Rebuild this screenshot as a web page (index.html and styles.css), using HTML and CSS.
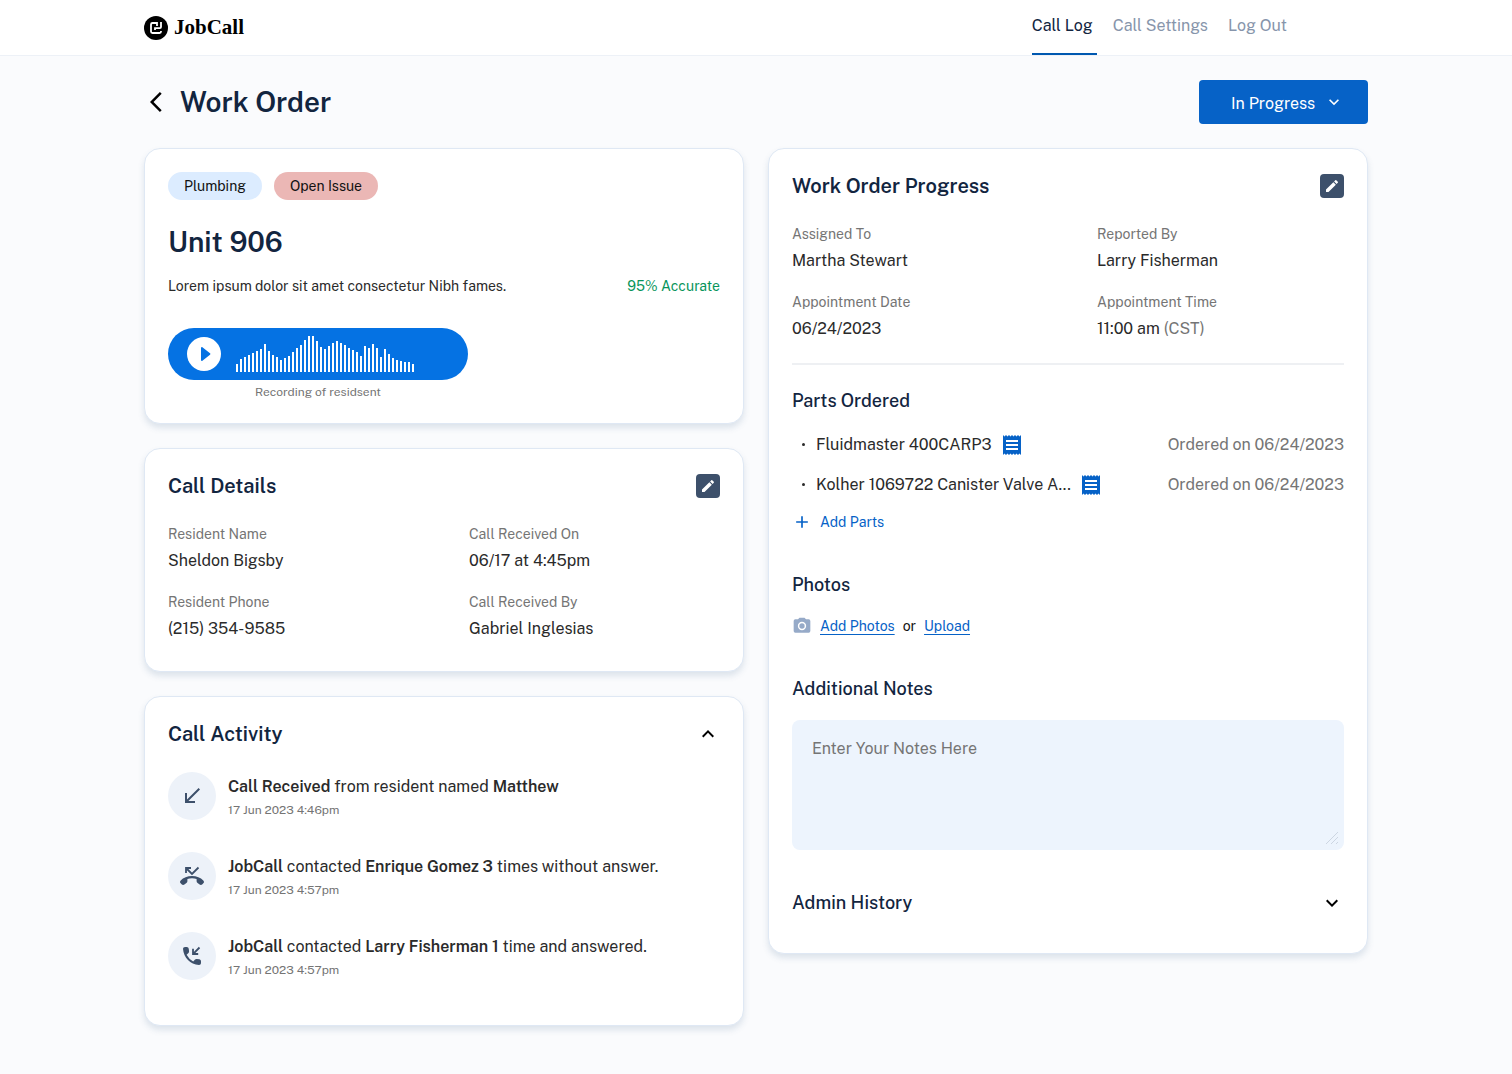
FILE: index.html
```html
<!DOCTYPE html>
<html lang="en">
<head>
    <meta charset="UTF-8">
    <meta name="viewport" content="width=device-width, initial-scale=1.0">
    <title>JobCall - Work Order</title>
    <link rel="stylesheet" href="styles.css">
</head>
<body>
    <!-- Top Navigation -->
    <header class="top-bar">
        <div class="top-bar-inner">
            <a class="logo" href="#">
                <svg width="24" height="24" viewBox="0 0 24 24" fill="none">
                    <circle cx="12" cy="12" r="12" fill="#000"/>
                    <path d="M13 7H8.500A1.500 1.500 0 0 0 7 8.500v7A1.500 1.500 0 0 0 8.500 17h7a1.500 1.500 0 0 0 1.500-1.500V15M17 6v5a1.200 1.200 0 0 1-1.200 1.200H11V14M13 6v4" stroke="#fff" stroke-width="1.800"/>
                </svg>
                <span>JobCall</span>
            </a>
            <nav class="top-nav">
                <a href="#" class="active">Call Log</a>
                <a href="#">Call Settings</a>
                <a href="#">Log Out</a>
            </nav>
        </div>
    </header>

    <main class="page">
        <div class="page-head">
            <button class="icon-btn" type="button" aria-label="Back">
                <svg width="24" height="24" viewBox="-6 0 24 24"><path d="M11.67 3.87 9.9 2.1 0 12l9.900 9.900 1.770-1.770L3.540 12z"/></svg>
            </button>
            <h1>Work Order</h1>
            <div class="status">
                <select aria-label="Status">
                    <option>In Progress</option>
                </select>
                <svg width="20" height="20" viewBox="0 0 24 24"><path d="M7.410 8.590 12 13.170l4.590-4.580L18 10l-6 6-6-6z"/></svg>
            </div>
        </div>

        <div class="columns">
            <div class="column">
                <!-- Unit -->
                <section class="card unit">
                    <div class="tags">
                        <span class="tag">Plumbing</span>
                        <span class="tag tag-open">Open Issue</span>
                    </div>
                    <h2>Unit 906</h2>
                    <div class="summary">
                        <p>Lorem ipsum dolor sit amet consectetur Nibh fames.</p>
                        <span class="accuracy">95% Accurate</span>
                    </div>
                    <figure class="recording">
                        <div class="player">
                            <button class="icon-btn" type="button" aria-label="Play">
                                <svg width="40" height="40" viewBox="0 0 40 40">
                                    <circle cx="20" cy="20" r="17" fill="#fff"/>
                                    <path d="M17 14v12c0 .8.800 1.200 1.400.7l7.600-6c.5-.4.5-1 0-1.400l-7.600-6c-.6-.5-1.400-.1-1.400.7z" fill="#0572e3"/>
                                </svg>
                            </button>
                            <svg width="178" height="36" viewBox="0 0 178 36" stroke="#fff" stroke-width="2">
                                <path d="M1 36v-8M5 36v-13M9 36v-15M13 36v-17M17 36v-19M21 36v-21M25 36v-23M29 36v-28M33 36v-21M37 36v-17M41 36v-15M45 36v-12M49 36v-14M53 36v-16M57 36v-20M61 36v-24M65 36v-27M69 36v-32M73 36v-36M77 36v-36M81 36v-31M85 36v-25M89 36v-23M93 36v-26M97 36v-29M101 36v-31M105 36v-29M109 36v-27M113 36v-24M117 36v-22M121 36v-20M125 36v-16M129 36v-26M133 36v-24M137 36v-28M141 36v-24M145 36v-15M149 36v-23M153 36v-18M157 36v-14M161 36v-12M165 36v-11M169 36v-10M173 36v-10M177 36v-8"/>
                            </svg>
                        </div>
                        <figcaption>Recording of residsent</figcaption>
                    </figure>
                </section>

                <!-- Call Details -->
                <section class="card details">
                    <div class="card-head">
                        <h3>Call Details</h3>
                        <button class="edit-btn" type="button" aria-label="Edit call details">
                            <svg width="16" height="16" viewBox="0 0 24 24"><path d="M3 17.250V21h3.750L17.810 9.940l-3.750-3.750L3 17.250zM20.710 7.040c.39-.39.39-1.020 0-1.410l-2.340-2.340a1 1 0 0 0-1.410 0l-1.830 1.830 3.750 3.750 1.830-1.830z"/></svg>
                        </button>
                    </div>
                    <dl class="fields">
                        <div><dt>Resident Name</dt><dd>Sheldon Bigsby</dd></div>
                        <div><dt>Call Received On</dt><dd>06/17 at 4:45pm</dd></div>
                        <div><dt>Resident Phone</dt><dd>(215) 354-9585</dd></div>
                        <div><dt>Call Received By</dt><dd>Gabriel Inglesias</dd></div>
                    </dl>
                </section>

                <!-- Call Activity -->
                <section class="card activity">
                    <div class="card-head">
                        <h3>Call Activity</h3>
                        <button class="icon-btn" type="button" aria-label="Collapse call activity">
                            <svg width="24" height="24" viewBox="0 0 24 24"><path d="m12 8-6 6 1.410 1.410L12 10.830l4.590 4.580L18 14z"/></svg>
                        </button>
                    </div>
                    <ul>
                        <li>
                            <span class="activity-icon">
                                <svg width="24" height="24" viewBox="0 0 24 24"><path d="M20 5.410 18.590 4 7 15.590V9H5v10h10v-2H8.410z"/></svg>
                            </span>
                            <div>
                                <p><b>Call Received</b> from resident named <b>Matthew</b></p>
                                <time>17 Jun 2023 4:46pm</time>
                            </div>
                        </li>
                        <li>
                            <span class="activity-icon">
                                <svg width="24" height="24" viewBox="0 0 24 24">
                                    <path d="M12 12c-4.600 0-8.600 1.600-11.300 4.500-.9.900-.9 2 0 2.800l.9.900c.8.800 1.900.900 2.800.3l2-1.400c.6-.5 1-1.100 1-1.900v-2.300c1.400-.5 3-.7 4.600-.7s3.200.2 4.600.7v2.300c0 .8.400 1.400 1 1.900l2 1.400c.9.600 2 .5 2.800-.3l.9-.9c.9-.8.900-1.900 0-2.800C20.600 13.600 16.600 12 12 12z"/>
                                    <path d="M11 4H6v5M6 4l6 6 6.500-6.500" fill="none" stroke="#3d506b" stroke-width="1.800"/>
                                </svg>
                            </span>
                            <div>
                                <p><b>JobCall</b> contacted <b>Enrique Gomez 3</b> times without answer.</p>
                                <time>17 Jun 2023 4:57pm</time>
                            </div>
                        </li>
                        <li>
                            <span class="activity-icon">
                                <svg width="24" height="24" viewBox="0 0 24 24">
                                    <path d="m19.230 15.260-2.540-.29c-.61-.07-1.210.14-1.640.57l-1.840 1.840a15.050 15.050 0 0 1-6.590-6.590l1.850-1.850c.43-.43.64-1.030.57-1.640l-.29-2.520A2 2 0 0 0 6.760 3.010H5.030c-1.130 0-2.070.94-2 2.070.53 8.540 7.360 15.360 15.890 15.890 1.130.07 2.070-.87 2.070-2v-1.730c.01-1.010-.75-1.860-1.760-1.980z"/>
                                    <path d="m19.500 3.500-6.300 6.300M13 4.800V10h5.200" fill="none" stroke="#3d506b" stroke-width="1.800"/>
                                </svg>
                            </span>
                            <div>
                                <p><b>JobCall</b> contacted <b>Larry Fisherman 1</b> time and answered.</p>
                                <time>17 Jun 2023 4:57pm</time>
                            </div>
                        </li>
                    </ul>
                </section>
            </div>

            <div class="column">
                <!-- Work Order Progress -->
                <section class="card progress">
                    <div class="card-head">
                        <h3>Work Order Progress</h3>
                        <button class="edit-btn" type="button" aria-label="Edit progress">
                            <svg width="16" height="16" viewBox="0 0 24 24"><path d="M3 17.250V21h3.750L17.810 9.940l-3.750-3.750L3 17.250zM20.710 7.040c.39-.39.39-1.020 0-1.410l-2.340-2.340a1 1 0 0 0-1.410 0l-1.830 1.830 3.750 3.750 1.830-1.830z"/></svg>
                        </button>
                    </div>
                    <dl class="fields">
                        <div><dt>Assigned To</dt><dd>Martha Stewart</dd></div>
                        <div><dt>Reported By</dt><dd>Larry Fisherman</dd></div>
                        <div><dt>Appointment Date</dt><dd>06/24/2023</dd></div>
                        <div><dt>Appointment Time</dt><dd>11:00 am <span class="muted">(CST)</span></dd></div>
                    </dl>
                    <hr>

                    <h4>Parts Ordered</h4>
                    <ul class="parts">
                        <li>
                            <span>Fluidmaster 400CARP3</span>
                            <svg width="24" height="24" viewBox="0 0 24 24"><path d="M18 17H6v-2h12v2zm0-4H6v-2h12v2zm0-4H6V7h12v2zM3 22l1.500-1.500L6 22l1.500-1.500L9 22l1.500-1.500L12 22l1.500-1.500L15 22l1.500-1.500L18 22l1.500-1.500L21 22V2l-1.500 1.500L18 2l-1.500 1.500L15 2l-1.500 1.500L12 2l-1.500 1.500L9 2 7.500 3.500 6 2 4.500 3.500 3 2v20z"/></svg>
                            <span class="ordered">Ordered on 06/24/2023</span>
                        </li>
                        <li>
                            <span>Kolher 1069722 Canister Valve A...</span>
                            <svg width="24" height="24" viewBox="0 0 24 24"><path d="M18 17H6v-2h12v2zm0-4H6v-2h12v2zm0-4H6V7h12v2zM3 22l1.500-1.500L6 22l1.500-1.500L9 22l1.500-1.500L12 22l1.500-1.500L15 22l1.500-1.500L18 22l1.500-1.500L21 22V2l-1.500 1.500L18 2l-1.500 1.500L15 2l-1.500 1.500L12 2l-1.500 1.500L9 2 7.500 3.500 6 2 4.500 3.500 3 2v20z"/></svg>
                            <span class="ordered">Ordered on 06/24/2023</span>
                        </li>
                    </ul>
                    <button class="add-parts" type="button">
                        <svg width="20" height="20" viewBox="0 0 24 24"><path d="M19 13h-6v6h-2v-6H5v-2h6V5h2v6h6z"/></svg>
                        Add Parts
                    </button>

                    <h4>Photos</h4>
                    <div class="photos">
                        <svg width="20" height="20" viewBox="0 0 24 24"><circle cx="12" cy="12" r="3.200"/><path d="M9 2 7.170 4H4a2 2 0 0 0-2 2v12a2 2 0 0 0 2 2h16a2 2 0 0 0 2-2V6a2 2 0 0 0-2-2h-3.170L15 2H9zm3 15a5 5 0 1 1 0-10 5 5 0 0 1 0 10z"/></svg>
                        <a href="#">Add Photos</a>
                        <span>or</span>
                        <a href="#">Upload</a>
                    </div>

                    <h4><label for="notes">Additional Notes</label></h4>
                    <div class="notes">
                        <textarea id="notes" placeholder="Enter Your Notes Here"></textarea>
                        <svg width="14" height="14" viewBox="0 0 14 14"><path d="M1 13 13 1M6 13l7-7M11 13l2-2"/></svg>
                    </div>

                    <div class="history">
                        <h4>Admin History</h4>
                        <button class="icon-btn" type="button" aria-label="Expand admin history">
                            <svg width="24" height="24" viewBox="0 0 24 24"><path d="M7.410 8.590 12 13.170l4.590-4.580L18 10l-6 6-6-6z"/></svg>
                        </button>
                    </div>
                </section>
            </div>
        </div>
    </main>
</body>
</html>
```
FILE: styles.css
```css
/* Global Styles */
* {
    margin: 0;
    padding: 0;
    box-sizing: border-box;
}

body {
    font-family: "Public Sans", Inter, "Liberation Sans", sans-serif;
    font-size: 16px;
    line-height: 25px;
    background-color: #fafbfd;
    color: #2a2a2a;
}

h1, h2, h3 {
    color: #12253f;
    font-weight: 600;
}

h1, h2 {
    font-size: 28px;
    line-height: 36px;
}

h3 {
    font-size: 20px;
    line-height: 28px;
}

h4 {
    font-size: 18px;
    font-weight: 500;
    color: #12253f;
}

ul {
    list-style: none;
}

svg {
    display: block;
    flex-shrink: 0;
}

button, select, textarea {
    font: inherit;
    border: none;
}

button {
    background: none;
    cursor: pointer;
}

.muted {
    color: #757575;
}

/* Top Navigation */
.top-bar {
    background-color: #fff;
    border-bottom: 1px solid #edf1f7;
}

.top-bar-inner {
    max-width: 1224px;
    height: 55px;
    margin: 0 auto;
    padding-right: 77px;
    display: flex;
    justify-content: space-between;
    align-items: center;
}

.logo {
    display: flex;
    align-items: center;
    gap: 6px;
    color: #000;
    text-decoration: none;
    font-family: "Liberation Serif", serif;
    font-size: 21px;
    font-weight: 700;
}

.top-nav {
    align-self: stretch;
    display: flex;
    gap: 16px;
}

.top-nav a {
    padding: 13px 4px 0 0;
    color: #8795ab;
    text-decoration: none;
    border-bottom: 2px solid transparent;
}

.top-nav .active {
    color: #12253f;
    border-color: #0058b0;
}

/* Page heading */
.page {
    max-width: 1224px;
    margin: 0 auto;
    padding: 24px 0 48px;
}

.page-head {
    display: flex;
    align-items: center;
    gap: 12px;
    margin-bottom: 24px;
}

.status {
    position: relative;
    margin-left: auto;
}

.status select {
    appearance: none;
    height: 44px;
    padding: 2px 52px 0 32px;
    border-radius: 4px;
    background-color: #0662c7;
    color: #fff;
}

.status svg {
    position: absolute;
    top: 12px;
    right: 24px;
    fill: #fff;
    pointer-events: none;
}

/* Cards */
.columns {
    display: grid;
    grid-template-columns: 1fr 1fr;
    align-items: start;
    gap: 24px;
}

.column {
    display: grid;
    gap: 24px;
}

.card {
    padding: 23px;
    background-color: #fff;
    border: 1px solid #dfe8f4;
    border-radius: 16px;
    box-shadow: 0 4px 6px rgba(70, 105, 145, 0.16);
}

.card-head {
    display: flex;
    justify-content: space-between;
    align-items: center;
    margin-bottom: 24px;
}

.edit-btn {
    display: grid;
    place-items: center;
    width: 24px;
    height: 24px;
    border-radius: 4px;
    background-color: #3d506b;
    fill: #fff;
}

.fields {
    display: grid;
    grid-template-columns: 6fr 5fr;
    gap: 19px 0;
}

.fields dt {
    margin-bottom: 4px;
    font-size: 14px;
    line-height: 20px;
    color: #757575;
}

/* Unit */
.tags {
    display: flex;
    gap: 12px;
    margin-bottom: 24px;
}

.tag {
    padding: 0 16px;
    border-radius: 14px;
    font-size: 14px;
    line-height: 28px;
    background-color: #dcecff;
    color: #111;
}

.tag-open {
    background-color: #ebb7b5;
}

.summary {
    display: flex;
    justify-content: space-between;
    margin: 16px 0 32px;
    font-size: 14px;
    line-height: 20px;
}

.accuracy {
    color: #07945a;
}

.recording {
    width: 300px;
}

.player {
    display: flex;
    align-items: center;
    gap: 12px;
    height: 52px;
    padding: 0 16px;
    border-radius: 26px;
    background-color: #0572e3;
}

.recording figcaption {
    margin-top: 4px;
    font-size: 12px;
    line-height: 16px;
    text-align: center;
    color: #757575;
}

.details {
    padding-bottom: 30px;
}

/* Call Activity */
.activity {
    padding-bottom: 45px;
}

.activity ul {
    display: grid;
    gap: 32px;
}

.activity li {
    display: flex;
    align-items: center;
    gap: 12px;
}

.activity b {
    font-weight: 600;
}

.activity time {
    display: block;
    margin-top: 3px;
    font-size: 12px;
    line-height: 16px;
    color: #757575;
}

.activity-icon {
    display: grid;
    place-items: center;
    width: 48px;
    height: 48px;
    border-radius: 50%;
    background-color: #edf2f9;
    fill: #3d506b;
}

/* Work Order Progress */
.progress {
    padding-bottom: 38px;
}

.progress .fields {
    grid-template-columns: 21fr 17fr;
}

.progress hr {
    height: 2px;
    margin: 22px 0 23px;
    border: none;
    background-color: #eef0f3;
}

.parts {
    display: grid;
    gap: 15px;
    margin: 19px 0 15px;
}

.parts li {
    display: flex;
    align-items: center;
    gap: 8px;
}

.parts li::before {
    content: "";
    width: 3px;
    height: 3px;
    margin: 0 3px 0 10px;
    border-radius: 50%;
    background-color: #2a2a2a;
}

.parts svg {
    fill: #0662c7;
}

.ordered {
    margin-left: auto;
    color: #757575;
}

.add-parts {
    display: flex;
    gap: 8px;
    margin-bottom: 40px;
    font-size: 14px;
    line-height: 20px;
    color: #0662c7;
    fill: #0662c7;
}

.photos {
    display: flex;
    gap: 8px;
    margin: 19px 0 40px;
    font-size: 14px;
    line-height: 20px;
    color: #111;
    fill: #96aac8;
}

.photos a {
    color: #0662c7;
    text-underline-offset: 3px;
}

.notes {
    position: relative;
    margin: 19px 0 40px;
}

.notes textarea {
    display: block;
    width: 100%;
    height: 130px;
    padding: 16px 20px;
    border-radius: 8px;
    background-color: #edf4fd;
    color: #2a2a2a;
    resize: none;
}

.notes textarea::placeholder {
    color: #757575;
}

.notes svg {
    position: absolute;
    right: 5px;
    bottom: 5px;
    stroke: #cdd6e2;
    pointer-events: none;
}

.history {
    display: flex;
    justify-content: space-between;
}
```
